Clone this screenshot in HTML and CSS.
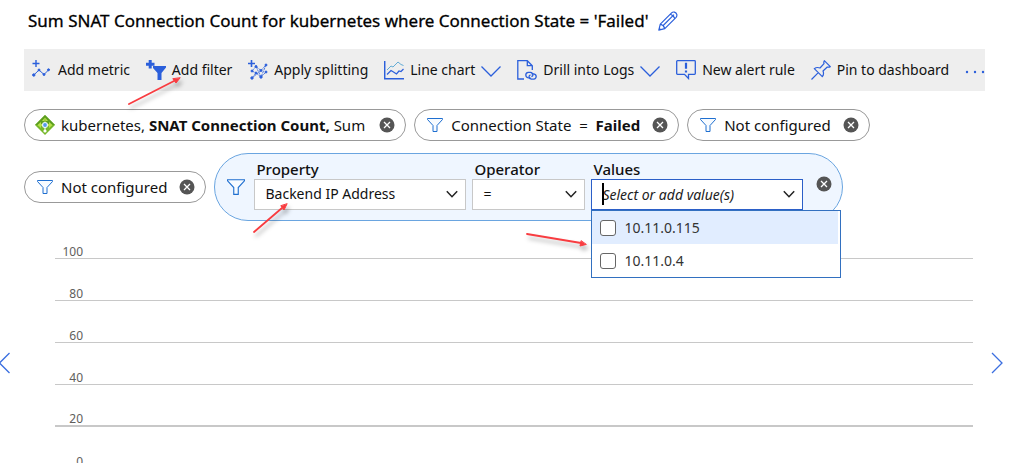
FILE: index.html
```html
<!DOCTYPE html>
<html lang="en">
<head>
<meta charset="utf-8">
<title>Metrics</title>
<link rel="stylesheet" href="styles.css">
</head>
<body>
<svg class="defs" width="0" height="0" aria-hidden="true">
  <symbol id="funnel" viewBox="0 0 16 16"><path d="M.5 1.500h15v1L10 8.500v6H6v-6L.5 2.500z" fill="#f7fbff" stroke="#1f6fd0"/></symbol>
  <symbol id="close" viewBox="0 0 16 16"><circle cx="8" cy="8" r="7.500" fill="#555"/><path d="M5 5l6 6M11 5l-6 6" stroke="#fff" stroke-width="1.300"/></symbol>
  <symbol id="chevron-wide" viewBox="0 0 20 20"><path d="M.5 6.500L10 16l9.500-9.500" fill="none" stroke="#2b5fdb" stroke-width="1.300"/></symbol>
  <symbol id="chevron" viewBox="0 0 12 12"><path d="M.8 3.200L6 8.700l5.200-5.500" fill="none" stroke="#222" stroke-width="1.500"/></symbol>
</svg>

<header class="title">
  <h1>Sum SNAT Connection Count for kubernetes where Connection State = 'Failed'</h1>
  <button class="bare" type="button" aria-label="Edit title">
    <svg width="20" height="20" viewBox="0 0 20 20" fill="none" stroke="#2b5fdb" stroke-width="1.200" stroke-linejoin="round"><path d="M.8 19.200l1.500-6L13.600 1.900q1.200-1.200 2.800-.8 1.900.6 2.500 2.600.2 1.500-.8 2.600L6.800 17.600zM2.300 13.200q3.200.8 4.500 4.400M4.700 15L16 3.700M12.300 3.200q3.300 1 4.500 4.400M1 17.300l1.700 1.500"/></svg>
  </button>
</header>

<nav class="toolbar" aria-label="Chart commands">
  <button type="button">
    <svg width="20" height="20" viewBox="0 0 20 20" stroke="#2b5fdb" fill="#2b5fdb"><path d="M.5 3.500h7M4 0v7" stroke-width="1.400"/><path d="M1.800 15L7 10l5 4.500L17.500 9" fill="none"/><circle cx="1.800" cy="15" r="1.200"/><circle cx="7" cy="10" r="1"/><circle cx="12" cy="14.500" r="1"/><circle cx="16.500" cy="9.800" r="1"/></svg>
    <span>Add metric</span>
  </button>
  <button type="button">
    <svg width="20" height="20" viewBox="0 0 20 20" fill="#2b5fdb"><path d="M2.700 0h3v2.700h2.800v3H5.700v2.800h-3V5.700H0v-3h2.700zM7 6h13v1.500l-4.500 5.500v7h-4v-7L7 8z"/></svg>
    <span>Add filter</span>
  </button>
  <button type="button">
    <svg width="20" height="20" viewBox="0 0 20 20" stroke="#2b5fdb" fill="#2b5fdb"><path d="M0 3.500h7M3.500 0v7" stroke-width="1.600"/><path d="M4 11l4-4.500 5 4L18 5M4 18l4-5 5 4 5-5M8 6.500l5 10.500M13 10.500L4 18M4 11l4 2M18 5l-5 12" fill="none" stroke-width=".8" stroke-dasharray="2.500 .7"/><circle cx="4" cy="11" r="1"/><circle cx="8" cy="6.500" r="1"/><circle cx="13" cy="10.500" r="1"/><circle cx="18" cy="5" r="1"/><circle cx="4" cy="18" r="1.200"/><circle cx="8" cy="13" r="1"/><circle cx="13" cy="17" r="1.200"/><circle cx="18" cy="12" r="1"/></svg>
    <span>Apply splitting</span>
  </button>
  <button type="button">
    <svg width="20" height="20" viewBox="0 0 20 20" fill="none"><path d="M.7 1v17.800H20" stroke="#2b5fdb" stroke-width="1.500"/><path d="M3 10l4-4 2 1 5-5 3 2.500 2.500 1" stroke="#63acd5"/><path d="M3 14.500l4-4 2.500 1.500 3 2 2.500-3 2 .5 2.500-2.500" stroke="#2b5fdb" stroke-width="1.200"/></svg>
    <span>Line chart</span>
    <svg width="20" height="20"><use href="#chevron-wide"/></svg>
  </button>
  <button type="button">
    <svg width="20" height="20" viewBox="0 0 20 20" fill="none" stroke="#2b5fdb" stroke-width="1.300"><path d="M7 19H.8V.700h9.500l5 5V10M10.300.700v5h5"/><path d="M13.500 17.800h-2.200q-2.500-.3-2.500-2.700 0-2.500 2.500-2.800h2q2.500.2 2.700 2.600-.2 1.400-1.600 1.800"/><path d="M14.500 13.800h2.300q2.300.4 2.400 2.700-.2 2.400-2.400 2.700h-2.400q-2.300-.5-2.400-2.700.1-1 1.500-1.600"/></svg>
    <span>Drill into Logs</span>
    <svg width="20" height="20"><use href="#chevron-wide"/></svg>
  </button>
  <button type="button">
    <svg width="20" height="20" viewBox="0 0 20 20" fill="none" stroke="#2b5fdb" stroke-width="1.300"><path d="M1.500.700h17q.8 0 .8.800v12q0 .8-.8.800h-6V18.500L8.500 14.300h-7q-.8 0-.8-.8v-12q0-.8.800-.8z"/><path d="M10 2.800v6M10 10.500v2" stroke-width="2.200"/></svg>
    <span>New alert rule</span>
  </button>
  <button type="button">
    <svg width="20" height="20" viewBox="0 0 20 20" fill="none" stroke="#2b5fdb" stroke-width="1.200" stroke-linejoin="round"><path d="M.5 19.500l6.800-6.800M3.300 8.700q2.500-2 5.700-.7l4-4.300q-.5-1.600.3-3l6 6q-1.400.8-3 .3l-4.300 4q1.300 3.200-.7 5.700z"/></svg>
    <span>Pin to dashboard</span>
  </button>
  <button class="more" type="button" aria-label="More commands">
    <svg width="20" height="20" viewBox="0 0 20 20" fill="#2b5fdb"><circle cx="2" cy="12" r="1.200"/><circle cx="10" cy="12" r="1.200"/><circle cx="18" cy="12" r="1.200"/></svg>
  </button>
</nav>

<main>
  <section class="filters" aria-label="Metrics and filters">
    <div class="pill metric">
      <svg width="20" height="20" viewBox="0 0 20 20"><path d="M10 0l10 10-10 10L0 10z" fill="#76b82a"/><path d="M10 0l10 10H0z" fill="#5c9e20"/><path d="M10 2.500l3 3.500h-2v3h3V7l3.500 3-3.500 3v-2h-3M10 2.500L7 6h2v3H6V7l-3.500 3L6 13v-2h3" fill="#b8e04a"/><circle cx="10" cy="10" r="3" fill="#e6f3ff"/><circle cx="10" cy="10" r="1.900" fill="#5599e8"/><path d="M10 12v3" stroke="#fff"/><circle cx="10" cy="16" r="1.600" fill="#fff"/></svg>
      <span>kubernetes, <b>SNAT Connection Count,</b> Sum</span>
      <button class="bare" type="button" aria-label="Remove metric"><svg width="16" height="16"><use href="#close"/></svg></button>
    </div>
    <div class="pill">
      <svg width="16" height="16"><use href="#funnel"/></svg>
      <span>Connection State&nbsp; =&nbsp; <b>Failed</b></span>
      <button class="bare" type="button" aria-label="Remove filter"><svg width="16" height="16"><use href="#close"/></svg></button>
    </div>
    <div class="pill">
      <svg width="16" height="16"><use href="#funnel"/></svg>
      <span>Not configured</span>
      <button class="bare" type="button" aria-label="Remove filter"><svg width="16" height="16"><use href="#close"/></svg></button>
    </div>
    <div class="pill">
      <svg width="16" height="16"><use href="#funnel"/></svg>
      <span>Not configured</span>
      <button class="bare" type="button" aria-label="Remove filter"><svg width="16" height="16"><use href="#close"/></svg></button>
    </div>

    <form class="editor">
      <svg width="18" height="18"><use href="#funnel"/></svg>
      <div class="field wide">
        <label for="property">Property</label>
        <div class="control">
          <select id="property"><option>Backend IP Address</option></select>
          <svg class="arrow" width="12" height="12"><use href="#chevron"/></svg>
        </div>
      </div>
      <div class="field">
        <label for="operator">Operator</label>
        <div class="control">
          <select id="operator"><option>=</option></select>
          <svg class="arrow" width="12" height="12"><use href="#chevron"/></svg>
        </div>
      </div>
      <div class="field wide">
        <label for="values">Values</label>
        <div class="control active">
          <input id="values" type="text" placeholder="Select or add value(s)">
          <i class="caret"></i>
          <svg class="arrow" width="12" height="12"><use href="#chevron"/></svg>
          <div class="menu">
            <label class="current"><input type="checkbox"> 10.11.0.115</label>
            <label><input type="checkbox"> 10.11.0.4</label>
          </div>
        </div>
      </div>
      <button class="bare" type="button" aria-label="Remove filter"><svg width="16" height="16"><use href="#close"/></svg></button>
    </form>
  </section>

  <section class="viewer" aria-label="Chart">
    <button class="bare" type="button" aria-label="Previous chart"><svg width="12" height="22" viewBox="0 0 12 22" fill="none" stroke="#3b6fe0" stroke-width="1.300"><path d="M9.500 1L-.5 11l10 10"/></svg></button>
    <div class="chart">
      <div class="tick"><span>100</span></div>
      <div class="tick"><span>80</span></div>
      <div class="tick"><span>60</span></div>
      <div class="tick"><span>40</span></div>
      <div class="tick strong"><span>20</span></div>
      <div class="tick"><span>0</span></div>
    </div>
    <button class="bare" type="button" aria-label="Next chart"><svg width="12" height="22" viewBox="0 0 12 22" fill="none" stroke="#3b6fe0" stroke-width="1.300"><path d="M1 1l10 10L1 21"/></svg></button>
  </section>
</main>

<svg class="notes" width="620" height="260" aria-hidden="true">
  <g fill="#f83c40" stroke="#f83c40" stroke-width="1.800" stroke-linecap="round">
    <path d="M129 104l45-23"/><path d="M180 78l-4 5-3-4z" stroke-width="1"/>
    <path d="M254 232l28-24"/><path d="M287 204l-3 6-3-4z" stroke-width="1"/>
    <path d="M527 234l54 9"/><path d="M586 244.500l-6 1.500 1-5z" stroke-width="1"/>
  </g>
</svg>
</body>
</html>
```
FILE: styles.css
```css
* { box-sizing: border-box; }

body {
  margin: 0;
  height: 100vh;
  overflow: hidden;
  background: #fff;
  color: #111;
  font: 14px/20px "Noto Sans", "Segoe UI", sans-serif;
}

button, input, select { font: inherit; color: inherit; }
svg { display: block; flex: none; }
.defs { position: absolute; }

.bare {
  display: flex;
  padding: 0;
  border: 0;
  background: none;
}

.title {
  display: flex;
  align-items: center;
  gap: 10px;
  height: 49px;
  padding: 0 28px 8px;
}

h1 {
  margin: 0;
  color: #000;
  font-size: 17px;
  font-weight: 400;
  line-height: 24px;
  white-space: nowrap;
  -webkit-text-stroke: 0.3px #000;
}

.toolbar {
  display: flex;
  align-items: center;
  justify-content: space-between;
  height: 42px;
  margin: 0 28px 0 24px;
  padding-left: 8px;
  background: #eee;
}

.toolbar button {
  display: flex;
  align-items: center;
  gap: 6px;
  padding: 0;
  border: 0;
  background: none;
  white-space: nowrap;
}

.filters {
  display: flex;
  flex-wrap: wrap;
  align-items: center;
  gap: 12px 8px;
  padding: 18px 24px 0;
}

.pill {
  display: flex;
  align-items: center;
  gap: 8px;
  height: 32px;
  padding: 0 10px 0 12px;
  border: 1px solid #999;
  border-radius: 16px;
  font-size: 15px;
  white-space: nowrap;
}

.pill .bare { margin-left: 4px; }
.metric { gap: 6px; padding-left: 10px; }
.metric .bare { margin-left: 8px; }

.editor {
  display: flex;
  align-items: center;
  gap: 6px;
  height: 68px;
  padding: 0 10px 0 12px;
  border: 1px solid #6aa5e0;
  border-radius: 34px;
  background: #eff6ff;
}

.editor > svg { margin-right: 3px; }
.editor > .bare { margin: 0 0 6px 7px; }

.field { width: 113px; }
.field.wide { width: 212px; }

.field > label {
  display: block;
  padding-left: 2px;
  font-size: 15px;
  font-weight: 500;
  line-height: 16px;
  padding-bottom: 2px;
}

.control { position: relative; height: 31px; margin-bottom: 4px; }

.control select,
.control > input {
  display: block;
  width: 100%;
  height: 31px;
  padding: 0 32px 0 10px;
  border: 1px solid #c8c8c8;
  border-radius: 0;
  background: #fff;
  appearance: none;
}

.control > input { border-color: #2b5fc8; }
.control > input::placeholder { color: #222; font-style: italic; opacity: 1; }

.arrow { position: absolute; top: 9px; right: 8px; pointer-events: none; }

.caret {
  position: absolute;
  top: 4px;
  left: 11px;
  width: 2px;
  height: 22px;
  background: #000;
}

.menu {
  position: absolute;
  z-index: 1;
  top: 31px;
  left: 0;
  width: 250px;
  padding: 0 2px 0 0;
  border: 1px solid #3270c0;
  background: #fff;
}

.menu label {
  display: flex;
  align-items: center;
  gap: 8px;
  height: 33px;
  padding: 2px 0 0 8px;
  color: #333;
}

.menu .current { background: #e1edff; }

.menu input {
  width: 16px;
  height: 16px;
  margin: 0;
  border: 1px solid #666;
  border-radius: 3px;
  background: #fff;
  appearance: none;
}

.viewer {
  display: flex;
  align-items: center;
  height: 284px;
  padding-right: 10px;
}

.chart {
  flex: 1;
  align-self: flex-start;
  margin: 0 18px 0 43px;
}

.tick {
  display: flex;
  align-items: flex-end;
  height: 42px;
  border-bottom: 1px solid #c8c8c8;
  color: #605e5c;
  font-size: 12px;
  line-height: 12px;
}

.tick:first-child { height: 38px; }
.tick.strong { border-bottom-width: 2px; }
.tick span { width: 28px; text-align: right; }

.notes {
  position: absolute;
  z-index: 2;
  top: 0;
  left: 0;
  pointer-events: none;
  filter: drop-shadow(2px 4px 2px rgb(0 0 0 / 30%));
}
```
